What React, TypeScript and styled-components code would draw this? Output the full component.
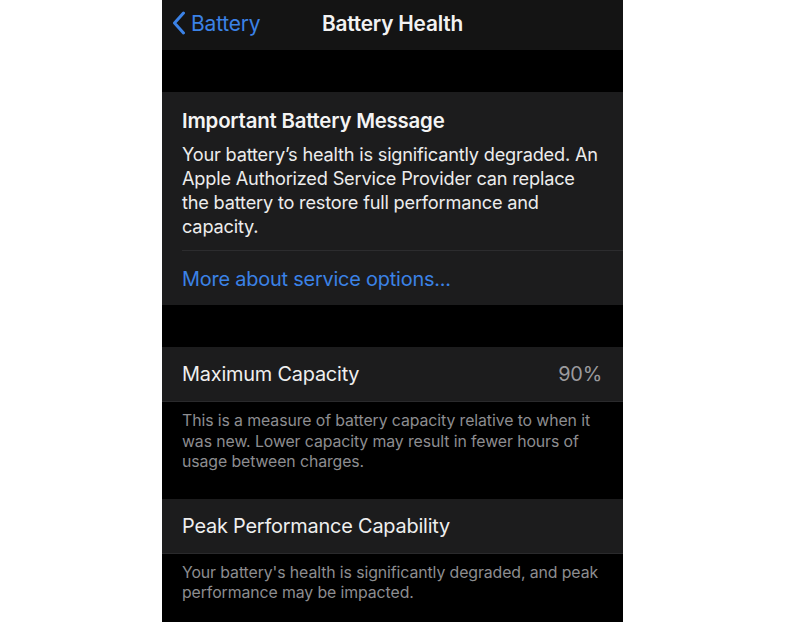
import React from 'react';
import styled, { createGlobalStyle } from 'styled-components';

const GlobalStyle = createGlobalStyle`
  html, body {
    margin: 0;
    padding: 0;
    background: #ffffff;
  }
  body {
    font-family: Inter, "Noto Sans", "Liberation Sans", sans-serif;
    -webkit-font-smoothing: antialiased;
  }
`;

const Screen = styled.div`
  width: 461px;
  height: 622px;
  margin-left: 162px;
  background: #000000;
  display: flex;
  flex-direction: column;
  overflow: hidden;
`;

const NavBar = styled.div`
  height: 50px;
  background: #141414;
  display: grid;
  grid-template-columns: 1fr auto 1fr;
  align-items: center;
  padding: 0 10px;
  flex-shrink: 0;
`;

const BackLink = styled.div`
  display: flex;
  align-items: center;
  gap: 5px;
  color: #3b82e6;
  font-size: 21px;
  letter-spacing: -0.2px;
  margin-top: -4px;
`;

const NavTitle = styled.div`
  color: #f2f2f2;
  font-size: 20.8px;
  font-weight: 600;
  letter-spacing: -0.2px;
  margin-top: -4px;
`;

const Gap = styled.div<{ h: number }>`
  height: ${p => p.h}px;
  flex-shrink: 0;
`;

const Card = styled.div`
  background: #1c1c1d;
  flex-shrink: 0;
  padding-left: 20px;
`;

const MessageBlock = styled.div`
  padding: 15px 20px 12px 0;
  height: 159px;
  box-sizing: border-box;
  border-bottom: 1px solid #2c2c2e;
`;

const MessageTitle = styled.div`
  color: #f4f4f4;
  font-size: 20.4px;
  font-weight: 600;
  line-height: 28px;
  letter-spacing: -0.2px;
  margin-bottom: 7px;
`;

const MessageBody = styled.div`
  color: #ececec;
  font-size: 18.2px;
  line-height: 24px;
  letter-spacing: -0.2px;
`;

const LinkRow = styled.div`
  height: 54px;
  display: flex;
  align-items: center;
  padding-right: 20px;
  color: #3b82e6;
  font-size: 19.9px;
  letter-spacing: -0.2px;
  padding-top: 2px;
  box-sizing: border-box;
`;

const Row = styled.div`
  height: 55px;
  display: flex;
  align-items: center;
  justify-content: space-between;
  padding: 0 21px 0 20px;
  background: #1c1c1d;
  border-bottom: 1px solid #2a2a2c;
  box-sizing: border-box;
  flex-shrink: 0;
`;

const RowLabel = styled.div`
  color: #efefef;
  font-size: 19.9px;
  letter-spacing: -0.2px;
`;

const RowValue = styled.div`
  color: #9b9b9e;
  font-size: 19.9px;
  letter-spacing: -0.2px;
`;

const Footnote = styled.div`
  color: #8d8d90;
  font-size: 15.85px;
  line-height: 20.5px;
  letter-spacing: -0.1px;
  padding: 9px 14px 0 20px;
  flex-shrink: 0;
`;

const Chevron = () => (
  <svg width="14" height="24" viewBox="0 0 14 24" fill="none">
    <path d="M11.5 2 L2.5 12 L11.5 22" stroke="#3b82e6" strokeWidth="3" strokeLinecap="round" strokeLinejoin="round" />
  </svg>
);

export default function App() {
  return (
    <>
      <GlobalStyle />
      <Screen>
        <NavBar>
          <BackLink>
            <Chevron />
            Battery
          </BackLink>
          <NavTitle>Battery Health</NavTitle>
          <div />
        </NavBar>

        <Gap h={42} />

        <Card>
          <MessageBlock>
            <MessageTitle>Important Battery Message</MessageTitle>
            <MessageBody>
              Your battery’s health is significantly degraded. An Apple Authorized Service Provider can replace
              the battery to restore full performance and capacity.
            </MessageBody>
          </MessageBlock>
          <LinkRow>More about service options...</LinkRow>
        </Card>

        <Gap h={42} />

        <Row>
          <RowLabel>Maximum Capacity</RowLabel>
          <RowValue>90%</RowValue>
        </Row>
        <Footnote>
          This is a measure of battery capacity relative to when it was new. Lower capacity may result in fewer
          hours of usage between charges.
        </Footnote>
        <Gap h={26} />

        <Row>
          <RowLabel>Peak Performance Capability</RowLabel>
        </Row>
        <Footnote>
          Your battery's health is significantly degraded, and peak performance may be impacted.
        </Footnote>
      </Screen>
    </>
  );
}
